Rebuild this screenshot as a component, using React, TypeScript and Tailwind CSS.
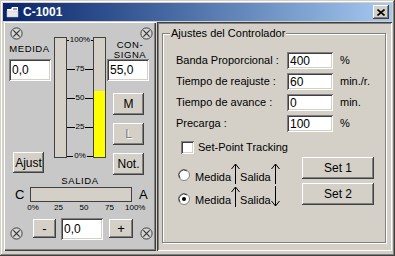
import React from "react";

const raised =
  "shadow-[inset_-1px_-1px_#404040,inset_1px_1px_#ffffff,inset_-2px_-2px_#808080]";
const sunken =
  "shadow-[inset_1px_1px_#808080,inset_-1px_-1px_#ffffff,inset_2px_2px_#404040,inset_-2px_-2px_#d4d0c8]";

const Screw = () => (
  <svg width="13" height="13" viewBox="0 0 13 13" className="block shrink-0">
    <circle cx="6.5" cy="6.5" r="5.6" fill="#d6d6d6" stroke="#404040" strokeWidth="1" />
    <path d="M3.4 3.4 L9.6 9.6 M9.6 3.4 L3.4 9.6" stroke="#303030" strokeWidth="1.1" />
  </svg>
);

const Arrow = ({ down = false }: { down?: boolean }) => (
  <svg width="9" height="21" viewBox="0 0 9 21" className="block shrink-0">
    {down ? (
      <path d="M4.5 0 L4.5 20 M0.5 15 L4.5 20 L8.5 15" stroke="#000" strokeWidth="1" fill="none" />
    ) : (
      <path d="M4.5 21 L4.5 1 M0.5 6 L4.5 1 L8.5 6" stroke="#000" strokeWidth="1" fill="none" />
    )}
  </svg>
);

const Btn = ({
  label,
  cls,
  disabled = false,
}: {
  label: string;
  cls: string;
  disabled?: boolean;
}) => (
  <div
    className={`flex items-center justify-center bg-[#d4d0c8] text-[11px] leading-none ${raised} ${cls} ${
      disabled ? "text-[#808080] [text-shadow:1px_1px_#ffffff]" : "text-black"
    }`}
  >
    {label}
  </div>
);

const Input = ({ value, cls }: { value: string; cls: string }) => (
  <div className={`flex items-center bg-white pl-[3px] text-[12px] leading-none text-black ${sunken} ${cls}`}>
    {value}
  </div>
);

const Row = ({ label, value, unit }: { label: string; value: string; unit: string }) => (
  <div className="flex h-[17px] items-center">
    <div className="w-[111px] text-[11px] leading-none">{label}</div>
    <Input value={value} cls="w-[46px] h-[17px] text-[11px]" />
    <div className="ml-[7px] text-[11px] leading-none">{unit}</div>
  </div>
);

export default function App() {
  return (
    <div className="h-[256px] w-[395px] overflow-hidden bg-[#d4d0c8] font-['Liberation_Sans',Arial,sans-serif] text-black">
      <div className="flex h-[256px] w-[395px] flex-col p-[3px] shadow-[inset_-1px_-1px_#404040,inset_1px_1px_#d4d0c8,inset_-2px_-2px_#808080,inset_2px_2px_#ffffff]">
        {/* Title bar */}
        <div className="flex h-[18px] items-center bg-linear-to-r from-[#0a246a] to-[#a6caf0]">
          <svg width="14" height="13" viewBox="0 0 14 13" className="ml-[3px] block">
            <path d="M1 3 L5 3 L6 1 L12 1 L12 11 L1 11 Z" fill="#ffffff" />
            <path d="M1 5 L12 5 L12 11 L1 11 Z" fill="#e8e8e8" stroke="#c0c0c0" strokeWidth="0.5" />
            <path d="M7 2 L11 2 L11 4 L7 4 Z" fill="#9aa0b0" />
          </svg>
          <div className="ml-[3px] text-[12px] font-bold leading-none text-white">C-1001</div>
          <div className="flex-1" />
          <div className={`mr-[3px] flex h-[14px] w-[16px] items-center justify-center bg-[#d4d0c8] ${raised}`}>
            <svg width="8" height="7" viewBox="0 0 8 7" className="block">
              <path d="M0.5 0.5 L7.5 6.5 M7.5 0.5 L0.5 6.5" stroke="#000" strokeWidth="1.6" />
            </svg>
          </div>
        </div>

        {/* Body */}
        <div className="mt-[1px] flex">
          {/* Left panel */}
          <div
            className={`ml-[1px] flex h-[229px] w-[152px] flex-col bg-[#c8c8c8] p-[2px] shadow-[inset_1px_1px_#ffffff,inset_-1px_-1px_#404040,inset_-2px_-2px_#808080]`}
          >
            <div className="flex h-[152px]">
              {/* col1 */}
              <div className="ml-[2px] flex w-[43px] flex-col">
                <div className="ml-[2px] mt-[3px]">
                  <Screw />
                </div>
                <div className="mt-[4px] h-[10px] text-center text-[9.5px] leading-[10px] tracking-[0.6px]">MEDIDA</div>
                <Input value="0,0" cls="mt-[5px] ml-[1px] w-[42px] h-[22px]" />
                <Btn label="Ajust" cls="mt-[71px] ml-[5px] w-[31px] h-[21px] text-[12px]" />
              </div>
              {/* gauge */}
              <div className="ml-[3px] mt-[13px] flex h-[121px] w-[52px]">
                <div className="h-full w-[13px] border border-[#404040] bg-[#d4d0c8]" />
                <div className="flex h-full w-[26px] flex-col gap-[23px]">
                  {["100%", "75", "50", "25", "0%"].map((l) => (
                    <div key={l} className="flex h-[6px] items-center">
                      <div className="h-px flex-1 bg-black" />
                      <span className="px-[1px] text-[8px] leading-[6px]">{l}</span>
                      <div className="h-px flex-1 bg-black" />
                    </div>
                  ))}
                </div>
                <div className="flex h-full w-[13px] flex-col justify-end border border-[#404040] bg-[#d4d0c8]">
                  <div className="h-[66px] bg-[#ffff00]" />
                </div>
              </div>
              {/* col3 */}
              <div className="ml-[1px] flex w-[46px] flex-col">
                <div className="mt-[3px] self-end">
                  <Screw />
                </div>
                <div className="h-[10px] text-center text-[9.5px] leading-[10px] tracking-[0.6px]">CON-</div>
                <div className="h-[10px] text-center text-[9.5px] leading-[10px] tracking-[0.6px]">SIGNA</div>
                <Input value="55,0" cls="mt-[-1px] w-[42px] h-[22px]" />
                <Btn label="M" cls="mt-[12px] ml-[6px] w-[31px] h-[22px] text-[12px]" />
                <Btn label="L" disabled cls="mt-[8px] ml-[6px] w-[31px] h-[22px] text-[12px]" />
                <Btn label="Not." cls="mt-[8px] ml-[6px] w-[31px] h-[22px] text-[12px]" />
              </div>
            </div>
            <div className="h-[9px] text-center text-[9.5px] leading-[9px] tracking-[0.6px]">SALIDA</div>
            <div className="mt-[2px] flex h-[15px] items-center">
              <div className="ml-[9px] w-[10px] text-[13px] leading-none">C</div>
              <div className="ml-[5px] h-[15px] w-[102px] border border-[#404040] bg-[#d4d0c8]" />
              <div className="ml-[7px] text-[13px] leading-none">A</div>
            </div>
            <div className="ml-[17px] mt-[1px] flex w-[122px] justify-between">
              {["0%", "25", "50", "75", "100%"].map((l) => (
                <div key={l} className="w-[20px] text-center text-[8px] leading-[9px]">
                  {l}
                </div>
              ))}
            </div>
            <div className="mt-[6px] flex items-start">
              <div className="ml-[4px] mt-[9px]">
                <Screw />
              </div>
              <Btn label="-" cls="ml-[10px] mt-[1px] w-[23px] h-[19px] text-[13px]" />
              <Input value="0,0" cls="ml-[5px] w-[42px] h-[22px]" />
              <Btn label="+" cls="ml-[6px] mt-[1px] w-[24px] h-[19px] text-[13px]" />
              <div className="ml-[7px] mt-[9px]">
                <Screw />
              </div>
            </div>
          </div>

          {/* Right panel */}
          <div className="ml-[1px] h-[229px] w-[235px] p-[2px] shadow-[inset_1px_1px_#404040,inset_-1px_-1px_#ffffff,inset_2px_2px_#808080]">
            <div className="relative ml-[3px] mt-[9px] h-[210px] w-[224px] border border-[#808080] shadow-[inset_1px_1px_#ffffff,1px_1px_#ffffff]">
              <div className="absolute left-[7px] top-[-8px] bg-[#d4d0c8] px-[1px] text-[11px] leading-[14px]">
                Ajustes del Controlador
              </div>
              <div className="flex flex-col pl-[13px] pt-[18px]">
                <div className="flex flex-col gap-[4px]">
                  <Row label="Banda Proporcional :" value="400" unit="%" />
                  <Row label="Tiempo de reajuste :" value="60" unit="min./r." />
                  <Row label="Tiempo de avance :" value="0" unit="min." />
                  <Row label="Precarga :" value="100" unit="%" />
                </div>
                <div className="ml-[5px] mt-[9px] flex h-[13px] items-center">
                  <div className={`h-[13px] w-[13px] bg-white ${sunken}`} />
                  <div className="ml-[4px] text-[11px] leading-none">Set-Point Tracking</div>
                </div>
                <div className="mt-[3px] flex">
                  <div className="mt-[4px] flex w-[126px] flex-col">
                    <div className="flex h-[23px] items-end">
                      <svg width="12" height="12" viewBox="0 0 12 12" className="mb-[3px] ml-[2px] block shrink-0">
                        <circle cx="6" cy="6" r="5.5" fill="#ffffff" stroke="#808080" />
                        <path d="M2 9 A5 5 0 0 1 9 2" stroke="#404040" fill="none" />
                      </svg>
                      <span className="ml-[5px] text-[11px] leading-[14px]">Medida</span>
                      <Arrow />
                      <span className="text-[11px] leading-[14px]">Salida</span>
                      <Arrow />
                    </div>
                    <div className="flex h-[23px] items-end">
                      <svg width="12" height="12" viewBox="0 0 12 12" className="mb-[2px] ml-[2px] block shrink-0">
                        <circle cx="6" cy="6" r="5.5" fill="#ffffff" stroke="#808080" />
                        <path d="M2 9 A5 5 0 0 1 9 2" stroke="#404040" fill="none" />
                        <circle cx="6" cy="6" r="2" fill="#000" />
                      </svg>
                      <span className="ml-[5px] text-[11px] leading-[14px]">Medida</span>
                      <Arrow />
                      <span className="text-[11px] leading-[14px]">Salida</span>
                      <Arrow down />
                    </div>
                  </div>
                  <div className="flex flex-col gap-[4px]">
                    <Btn label="Set 1" cls="w-[72px] h-[22px] text-[12px]" />
                    <Btn label="Set 2" cls="w-[72px] h-[22px] text-[12px]" />
                  </div>
                </div>
              </div>
            </div>
          </div>
        </div>
      </div>
    </div>
  );
}
